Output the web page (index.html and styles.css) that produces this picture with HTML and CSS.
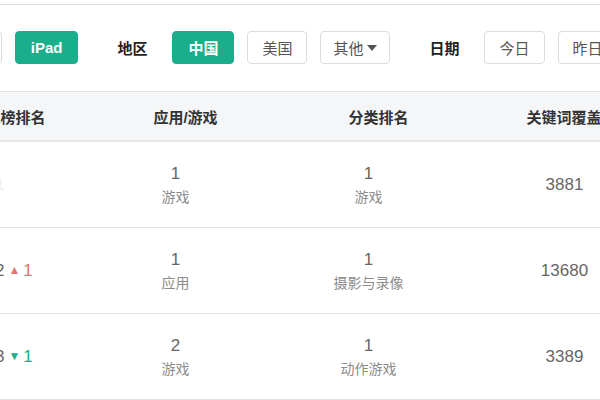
FILE: index.html
```html
<!DOCTYPE html>
<html lang="zh-CN">
<head>
  <meta charset="UTF-8">
  <meta name="viewport" content="width=device-width, initial-scale=1.0">
  <title>榜单排名</title>
  <link rel="stylesheet" href="styles.css">
</head>
<body>
  <div class="panel">
    <!-- Filter bar -->
    <div class="filters">
      <div class="group">
        <button class="btn">iPhone</button>
        <button class="btn on">iPad</button>
      </div>
      <div class="group">
        <span class="label">地区</span>
        <button class="btn on">中国</button>
        <button class="btn">美国</button>
        <button class="btn more">其他<span class="caret"></span></button>
      </div>
      <div class="group">
        <span class="label">日期</span>
        <button class="btn">今日</button>
        <button class="btn">昨日</button>
      </div>
    </div>

    <!-- Rank table -->
    <table class="rank">
      <colgroup>
        <col class="c-rank">
        <col class="c-mid">
        <col class="c-mid">
        <col class="c-mid">
        <col class="c-mid">
      </colgroup>
      <thead>
        <tr>
          <th>总榜排名</th>
          <th>应用/游戏</th>
          <th>分类排名</th>
          <th>关键词覆盖数</th>
          <th>操作</th>
        </tr>
      </thead>
      <tbody>
        <tr>
          <td class="pos"><span class="num faint">1</span></td>
          <td><div class="num">1</div><div class="sub">游戏</div></td>
          <td><div class="num">1</div><div class="sub">游戏</div></td>
          <td class="kw"><span class="num">3881</span></td>
          <td></td>
        </tr>
        <tr>
          <td class="pos"><span class="num">2</span><span class="up"><span class="tri">&#9650;</span>1</span></td>
          <td><div class="num">1</div><div class="sub">应用</div></td>
          <td><div class="num">1</div><div class="sub">摄影与录像</div></td>
          <td class="kw"><span class="num">13680</span></td>
          <td></td>
        </tr>
        <tr>
          <td class="pos"><span class="num">3</span><span class="down"><span class="tri">&#9660;</span>1</span></td>
          <td><div class="num">2</div><div class="sub">游戏</div></td>
          <td><div class="num">1</div><div class="sub">动作游戏</div></td>
          <td class="kw"><span class="num">3389</span></td>
          <td></td>
        </tr>
      </tbody>
    </table>
  </div>
</body>
</html>
```

FILE: styles.css
```css
body {
  margin: 0;
  background: #fff;
  overflow: hidden;
  font-family: "Liberation Sans", "Noto Sans CJK SC", sans-serif;
  color: #333;
}

/* Panel wrapper */
.panel {
  margin-top: 4px;
  border-top: 1px solid #dcdcdc;
}

/* Filter bar */
.filters {
  display: flex;
  align-items: center;
  gap: 39px;
  padding-top: 26px;
  margin-left: -75px;
  white-space: nowrap;
}

.group {
  display: flex;
  align-items: center;
  gap: 13px;
}

.label {
  font-size: 15px;
  font-weight: bold;
  color: #222;
  margin-right: 12px;
}

.btn {
  height: 33px;
  padding: 0 14px;
  border: 1px solid #dcdcdc;
  border-radius: 4px;
  background: #fff;
  color: #555;
  font-family: inherit;
  font-size: 15px;
  display: flex;
  align-items: center;
}

.btn.on {
  background: #1aae8a;
  border-color: #1aae8a;
  color: #fff;
  font-weight: bold;
  padding: 0 15px;
}

.btn.more {
  padding: 0 12px;
}

.caret {
  display: inline-block;
  margin-left: 4px;
  width: 0;
  height: 0;
  border-left: 5px solid transparent;
  border-right: 5px solid transparent;
  border-top: 6px solid #555;
}

/* Rank table */
.rank {
  margin-top: 27px;
  margin-left: -58px;
  border-collapse: collapse;
  table-layout: fixed;
  width: 919px;
}

.c-rank {
  width: 147px;
}

.c-mid {
  width: 193px;
}

.rank th {
  height: 48px;
  padding: 0;
  background: #f5f6f8;
  border-top: 1px solid #e3e3e3;
  border-bottom: 2px solid #e6e6e6;
  font-size: 15px;
  font-weight: bold;
  color: #333;
  text-align: center;
  white-space: nowrap;
}

.rank td {
  height: 85px;
  padding: 0 20px 0 0;
  border-bottom: 1px solid #e3e3e3;
  text-align: center;
  vertical-align: middle;
}

.rank td.kw {
  padding-right: 14px;
}

.rank td.pos {
  text-align: left;
  padding: 0 0 0 53px;
}

.num {
  font-size: 17px;
  color: #666;
  line-height: 24px;
}

.num.faint {
  color: #eeeeee;
}

.sub {
  font-size: 14px;
  color: #8c8c8c;
  line-height: 22px;
}

.up,
.down {
  font-size: 17px;
  margin-left: 4px;
}

.tri {
  font-size: 12px;
  margin-right: 3px;
  vertical-align: 2px;
}

.up {
  color: #e57373;
}

.down {
  color: #1aae8a;
}
```
